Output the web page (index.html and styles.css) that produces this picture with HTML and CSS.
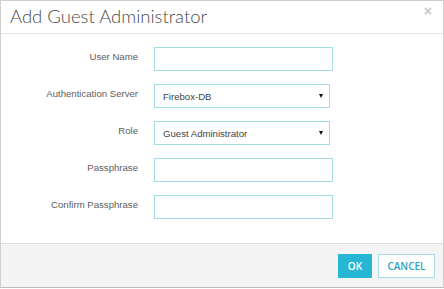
FILE: index.html
```html
<!DOCTYPE html>
<html lang="en">
<head>
    <meta charset="UTF-8">
    <title>Add Guest Administrator</title>
    <link rel="stylesheet" href="styles.css">
</head>
<body>
    <div class="dialog">
        <div class="dialog-header">
            <h2>Add Guest Administrator</h2>
            <span class="close">&times;</span>
        </div>

        <form class="dialog-body">
            <label class="field-label" for="userName">User Name</label>
            <input class="field" type="text" id="userName">

            <label class="field-label" for="authServer">Authentication Server</label>
            <div class="select-wrap">
                <select class="field" id="authServer">
                    <option>Firebox-DB</option>
                </select>
            </div>

            <label class="field-label" for="role">Role</label>
            <div class="select-wrap">
                <select class="field" id="role">
                    <option>Guest Administrator</option>
                </select>
            </div>

            <label class="field-label" for="pass">Passphrase</label>
            <input class="field" type="password" id="pass">

            <label class="field-label" for="confirmPass">Confirm Passphrase</label>
            <input class="field" type="password" id="confirmPass">
        </form>

        <div class="dialog-footer">
            <button class="btn btn-primary" type="button">OK</button>
            <button class="btn btn-default" type="button">CANCEL</button>
        </div>
    </div>
</body>
</html>
```

FILE: styles.css
```css
* {
    box-sizing: border-box;
    margin: 0;
    padding: 0;
}
body {
    font-family: 'Liberation Sans', Arial, sans-serif;
    background-color: #fff;
    color: #555;
}
.dialog {
    width: 444px;
    height: 288px;
    border: 1px solid #cfcfcf;
    border-bottom-color: #bdbdbd;
    display: flex;
    flex-direction: column;
}
.dialog-header {
    height: 33px;
    border-bottom: 1px solid #e6e6e6;
    display: flex;
    align-items: center;
    justify-content: space-between;
    padding: 0 11px 2px 9px;
}
.dialog-header h2 {
    font-family: Lato, 'Open Sans', sans-serif;
    font-weight: 300;
    font-size: 18.5px;
    color: #4a4a4a;
}
.close {
    font-family: 'Liberation Sans', Arial, sans-serif;
    font-size: 14px;
    font-weight: bold;
    color: #c8c8c8;
    margin-top: -10px;
}
.dialog-body {
    flex: 1;
    display: grid;
    grid-template-columns: 137px 179px;
    column-gap: 16px;
    row-gap: 13px;
    align-content: start;
    padding-top: 13px;
}
.field-label {
    font-size: 9.6px;
    color: #5e5e5e;
    text-align: right;
    align-self: center;
    padding-bottom: 5px;
}
.field {
    height: 24px;
    width: 179px;
    border: 1px solid #a4dce6;
    background: #fff;
    font-family: 'Liberation Sans', Arial, sans-serif;
    font-size: 9.6px;
    color: #444;
    padding: 0 8px;
    outline: none;
}
.select-wrap {
    position: relative;
    width: 176px;
}
.select-wrap select {
    width: 176px;
    appearance: none;
    -webkit-appearance: none;
    border-radius: 0;
}
.select-wrap::after {
    content: '';
    position: absolute;
    right: 7px;
    top: 10px;
    border-left: 2.5px solid transparent;
    border-right: 2.5px solid transparent;
    border-top: 4px solid #111;
    pointer-events: none;
}
.dialog-footer {
    height: 44px;
    border-top: 1px solid #dedede;
    background-color: #f4f4f4;
    display: flex;
    justify-content: flex-end;
    align-items: center;
    gap: 6px;
    padding: 1px 8px 0 0;
}
.btn {
    height: 24px;
    font-family: 'Open Sans', sans-serif;
    font-weight: 600;
    font-size: 10px;
    border: 1px solid transparent;
    cursor: pointer;
}
.btn-primary {
    width: 34px;
    background-color: #27b7d4;
    color: #fff;
    border-color: #27b7d4;
}
.btn-default {
    width: 57px;
    background-color: #fff;
    color: #2aa6c4;
    border-color: #a6dde8;
}
```
